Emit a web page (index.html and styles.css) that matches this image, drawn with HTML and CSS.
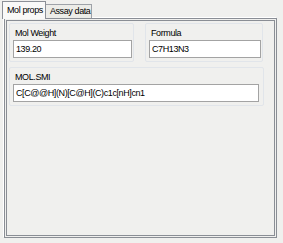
FILE: index.html
```html
<!DOCTYPE html>
<html lang="en">
<head>
    <meta charset="UTF-8">
    <title>Mol props</title>
    <link rel="stylesheet" href="styles.css">
</head>
<body>
    <div class="tabs">
        <div class="tab active">Mol props</div>
        <div class="tab">Assay data</div>
    </div>
    <div class="panel">
        <div class="row">
            <div class="group">
                <label>Mol Weight</label>
                <div class="field">139.20</div>
            </div>
            <div class="group">
                <label>Formula</label>
                <div class="field">C7H13N3</div>
            </div>
        </div>
        <div class="group wide">
            <label>MOL.SMI</label>
            <div class="field">C[C@@H](N)[C@H](C)c1c[nH]cn1</div>
        </div>
    </div>
</body>
</html>
```

FILE: styles.css
```css
body {
    margin: 0;
    padding: 1px 0 0 2px;
    background-color: #f0f0ee;
    font-family: "Liberation Sans", Arial, sans-serif;
    font-size: 9px;
    letter-spacing: -0.4px;
    color: #000;
}
.tabs {
    display: flex;
    align-items: flex-end;
    height: 17px;
    position: relative;
    z-index: 1;
}
.tab {
    height: 13px;
    line-height: 13px;
    padding: 0 1px 0 4px;
    border: 1px solid #9ea2a8;
    border-bottom: none;
    border-left: none;
    background: #ecece8;
}
.tab.active {
    height: 17px;
    line-height: 16px;
    padding: 0 2px 0 4px;
    background: #f9f9f8;
    margin-bottom: -1px;
    border-left: 1px solid #8c9097;
    border-color: #8c9097;
}
.panel {
    width: 273px;
    height: 220px;
    margin-left: 2px;
    border: 3px double #8a8e95;
    box-shadow: -1px -1px 0 #fff;
    padding: 2px 10px 0 2px;
    box-sizing: border-box;
}
.row {
    display: grid;
    grid-template-columns: 125px 118px;
    gap: 11px;
}
.group {
    border: 1px solid #e1e5ea;
    border-radius: 2px;
    padding: 3px 1px 3px 3px;
    margin-bottom: 5px;
}
.wide {
    padding-right: 4px;
}
.group label {
    display: block;
    padding-left: 2px;
    height: 12px;
    line-height: 12px;
    margin-bottom: 1px;
}
.field {
    height: 16px;
    line-height: 16px;
    background: #fff;
    border: 1px solid #a3a3a3;
    padding: 0 2px;
}
```
